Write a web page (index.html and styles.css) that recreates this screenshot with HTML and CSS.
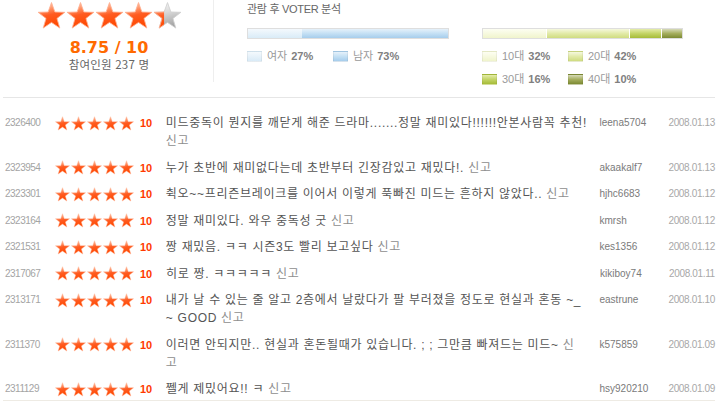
FILE: index.html
```html
<!DOCTYPE html>
<html lang="ko">
<head>
<meta charset="utf-8">
<title>관람 후 VOTER 분석</title>
<link rel="stylesheet" href="styles.css">
</head>
<body>
<svg class="defs" aria-hidden="true">
  <defs>
    <linearGradient id="gOn" x1="0" y1="0" x2="0.25" y2="1">
      <stop offset="0" stop-color="#ffd9c8"/>
      <stop offset="0.3" stop-color="#ff9a70"/>
      <stop offset="0.55" stop-color="#ff5c22"/>
      <stop offset="1" stop-color="#ff4800"/>
    </linearGradient>
    <linearGradient id="gOff" x1="0" y1="0" x2="0.25" y2="1">
      <stop offset="0" stop-color="#fafafa"/>
      <stop offset="0.45" stop-color="#dadada"/>
      <stop offset="1" stop-color="#a6a6a6"/>
    </linearGradient>
    <clipPath id="clipPart">
      <rect x="0" y="0" width="38" height="100"/>
    </clipPath>
    <symbol id="star-on" viewBox="0 0 100 94">
      <path d="M50 2 L61.76 34.82 L96.6 35.86 L69.02 57.18 L78.8 90.64 L50 71 L21.2 90.64 L30.98 57.18 L3.4 35.86 L38.24 34.82 Z" fill="url(#gOn)" stroke="#ffb092" stroke-width="3" stroke-linejoin="round"/>
    </symbol>
    <symbol id="star-off" viewBox="0 0 100 94">
      <path d="M50 2 L61.76 34.82 L96.6 35.86 L69.02 57.18 L78.8 90.64 L50 71 L21.2 90.64 L30.98 57.18 L3.4 35.86 L38.24 34.82 Z" fill="url(#gOff)" stroke="#cfcfcf" stroke-width="3" stroke-linejoin="round"/>
    </symbol>
  </defs>
</svg>

<div class="top">
  <div class="summary">
    <div class="big-stars">
      <svg class="bstar" viewBox="0 0 100 94"><use href="#star-on"/></svg>
      <svg class="bstar" viewBox="0 0 100 94"><use href="#star-on"/></svg>
      <svg class="bstar" viewBox="0 0 100 94"><use href="#star-on"/></svg>
      <svg class="bstar" viewBox="0 0 100 94"><use href="#star-on"/></svg>
      <svg class="bstar" viewBox="0 0 100 94"><use href="#star-off"/><g clip-path="url(#clipPart)"><use href="#star-on"/></g></svg>
    </div>
    <div class="score">8.75 / 10</div>
    <div class="count">참여인원 237 명</div>
  </div>

  <div class="analysis">
    <div class="title">관람 후 VOTER 분석</div>
    <div class="charts">
      <div class="chart gender">
        <div class="bar">
          <span class="seg female" style="width:27%"></span>
          <span class="seg male" style="width:73%"></span>
        </div>
        <div class="legend">
          <div class="item"><span class="sw female"></span><span class="lbl">여자</span><b>27%</b></div>
          <div class="item"><span class="sw male"></span><span class="lbl">남자</span><b>73%</b></div>
        </div>
      </div>
      <div class="chart age">
        <div class="bar gapped">
          <span class="seg a10" style="width:32%"></span>
          <span class="seg a20" style="width:42%"></span>
          <span class="seg a30" style="width:16%"></span>
          <span class="seg a40" style="width:10%"></span>
        </div>
        <div class="legend">
          <div class="item"><span class="sw a10"></span><span class="lbl">10대</span><b>32%</b></div>
          <div class="item"><span class="sw a20"></span><span class="lbl">20대</span><b>42%</b></div>
        </div>
        <div class="legend second">
          <div class="item"><span class="sw a30"></span><span class="lbl">30대</span><b>16%</b></div>
          <div class="item"><span class="sw a40"></span><span class="lbl">40대</span><b>10%</b></div>
        </div>
      </div>
    </div>
  </div>
</div>

<div class="list">
  <div class="row">
    <span class="no">2326400</span>
    <span class="stars"><svg class="sstar"><use href="#star-on"/></svg><svg class="sstar"><use href="#star-on"/></svg><svg class="sstar"><use href="#star-on"/></svg><svg class="sstar"><use href="#star-on"/></svg><svg class="sstar"><use href="#star-on"/></svg></span>
    <span class="pt">10</span>
    <span class="text">미드중독이 뭔지를 깨닫게 해준 드라마.......정말 재미있다!!!!!!안본사람꼭 추천!<br><a class="report">신고</a></span>
    <span class="id">leena5704</span>
    <span class="date">2008.01.13</span>
  </div>
  <div class="row">
    <span class="no">2323954</span>
    <span class="stars"><svg class="sstar"><use href="#star-on"/></svg><svg class="sstar"><use href="#star-on"/></svg><svg class="sstar"><use href="#star-on"/></svg><svg class="sstar"><use href="#star-on"/></svg><svg class="sstar"><use href="#star-on"/></svg></span>
    <span class="pt">10</span>
    <span class="text">누가 초반에 재미없다는데 초반부터 긴장감있고 재밌다!. <a class="report">신고</a></span>
    <span class="id">akaakalf7</span>
    <span class="date">2008.01.13</span>
  </div>
  <div class="row">
    <span class="no">2323301</span>
    <span class="stars"><svg class="sstar"><use href="#star-on"/></svg><svg class="sstar"><use href="#star-on"/></svg><svg class="sstar"><use href="#star-on"/></svg><svg class="sstar"><use href="#star-on"/></svg><svg class="sstar"><use href="#star-on"/></svg></span>
    <span class="pt">10</span>
    <span class="text">췩오~~프리즌브레이크를 이어서 이렇게 푹빠진 미드는 흔하지 않았다.. <a class="report">신고</a></span>
    <span class="id">hjhc6683</span>
    <span class="date">2008.01.12</span>
  </div>
  <div class="row">
    <span class="no">2323164</span>
    <span class="stars"><svg class="sstar"><use href="#star-on"/></svg><svg class="sstar"><use href="#star-on"/></svg><svg class="sstar"><use href="#star-on"/></svg><svg class="sstar"><use href="#star-on"/></svg><svg class="sstar"><use href="#star-on"/></svg></span>
    <span class="pt">10</span>
    <span class="text">정말 재미있다. 와우 중독성 굿 <a class="report">신고</a></span>
    <span class="id">kmrsh</span>
    <span class="date">2008.01.12</span>
  </div>
  <div class="row">
    <span class="no">2321531</span>
    <span class="stars"><svg class="sstar"><use href="#star-on"/></svg><svg class="sstar"><use href="#star-on"/></svg><svg class="sstar"><use href="#star-on"/></svg><svg class="sstar"><use href="#star-on"/></svg><svg class="sstar"><use href="#star-on"/></svg></span>
    <span class="pt">10</span>
    <span class="text">짱 재밌음. ㅋㅋ 시즌3도 빨리 보고싶다 <a class="report">신고</a></span>
    <span class="id">kes1356</span>
    <span class="date">2008.01.12</span>
  </div>
  <div class="row">
    <span class="no">2317067</span>
    <span class="stars"><svg class="sstar"><use href="#star-on"/></svg><svg class="sstar"><use href="#star-on"/></svg><svg class="sstar"><use href="#star-on"/></svg><svg class="sstar"><use href="#star-on"/></svg><svg class="sstar"><use href="#star-on"/></svg></span>
    <span class="pt">10</span>
    <span class="text">히로 짱. ㅋㅋㅋㅋㅋ <a class="report">신고</a></span>
    <span class="id">kikiboy74</span>
    <span class="date">2008.01.11</span>
  </div>
  <div class="row">
    <span class="no">2313171</span>
    <span class="stars"><svg class="sstar"><use href="#star-on"/></svg><svg class="sstar"><use href="#star-on"/></svg><svg class="sstar"><use href="#star-on"/></svg><svg class="sstar"><use href="#star-on"/></svg><svg class="sstar"><use href="#star-on"/></svg></span>
    <span class="pt">10</span>
    <span class="text">내가 날 수 있는 줄 알고 2층에서 날랐다가 팔 부러졌을 정도로 현실과 혼동 ~_<br>~ GOOD <a class="report">신고</a></span>
    <span class="id">eastrune</span>
    <span class="date">2008.01.10</span>
  </div>
  <div class="row">
    <span class="no">2311370</span>
    <span class="stars"><svg class="sstar"><use href="#star-on"/></svg><svg class="sstar"><use href="#star-on"/></svg><svg class="sstar"><use href="#star-on"/></svg><svg class="sstar"><use href="#star-on"/></svg><svg class="sstar"><use href="#star-on"/></svg></span>
    <span class="pt">10</span>
    <span class="text">이러면 안되지만.. 현실과 혼돈될때가 있습니다. ; ; 그만큼 빠져드는 미드~ <a class="report">신<br>고</a></span>
    <span class="id">k575859</span>
    <span class="date">2008.01.09</span>
  </div>
  <div class="row">
    <span class="no">2311129</span>
    <span class="stars"><svg class="sstar"><use href="#star-on"/></svg><svg class="sstar"><use href="#star-on"/></svg><svg class="sstar"><use href="#star-on"/></svg><svg class="sstar"><use href="#star-on"/></svg><svg class="sstar"><use href="#star-on"/></svg></span>
    <span class="pt">10</span>
    <span class="text">쩰게 제밌어요!! ㅋ <a class="report">신고</a></span>
    <span class="id">hsy920210</span>
    <span class="date">2008.01.09</span>
  </div>
</div>
</body>
</html>
```

FILE: styles.css
```css
* { box-sizing: border-box; }

html, body {
  margin: 0;
  padding: 0;
  background: #ffffff;
}

body {
  font-family: "Liberation Sans", "Noto Sans CJK KR", sans-serif;
  color: #555555;
  width: 721px;
  overflow: hidden;
}

.defs {
  position: absolute;
  width: 0;
  height: 0;
  overflow: hidden;
}

/* ---------- top area ---------- */
.top {
  display: flex;
  height: 97px;
}

.summary {
  width: 214px;
  height: 82px;
  padding-left: 5px;
  border-right: 1px solid #eeeeee;
  display: flex;
  flex-direction: column;
  align-items: center;
}

.big-stars {
  display: flex;
  margin-top: 2px;
}

.bstar {
  width: 29px;
  height: 27px;
  display: block;
}

.score {
  margin-top: 10px;
  font-family: "DejaVu Sans", sans-serif;
  font-weight: bold;
  font-size: 16px;
  line-height: 18px;
  color: #ff6a00;
}

.count {
  font-family: "Noto Sans CJK KR", sans-serif;
  font-size: 11.5px;
  line-height: 14px;
  color: #666666;
  letter-spacing: 0.2px;
}

.analysis {
  padding-left: 33px;
  padding-top: 2px;
  flex: 1;
}

.title {
  font-size: 11px;
  line-height: 14px;
  color: #666666;
  letter-spacing: -0.3px;
}

.charts {
  display: flex;
  gap: 33px;
  margin-top: 12px;
}

.chart.gender { width: 202px; }
.chart.age { width: 201px; }

.bar {
  display: flex;
  height: 11px;
  border: 1px solid #dedede;
}

.bar.gapped { gap: 1px; background: #ffffff; }

.seg { display: block; height: 100%; }

.female { background: linear-gradient(#f4f9fd, #d9ebf7); }
.male   { background: linear-gradient(#e6f1fa 0%, #c4e0f4 50%, #a6cdec 100%); }
.a10    { background: linear-gradient(#fdfef2, #f0f4cc); }
.a20    { background: linear-gradient(#f5f8de 0%, #e2eaa8 50%, #cfdc80 100%); }
.a30    { background: linear-gradient(#e4ecaa 0%, #c3d466 50%, #a6bc38 100%); }
.a40    { background: linear-gradient(#d6dab8 0%, #a5ae5e 50%, #7c8a32 100%); }

.legend {
  display: flex;
  margin-top: 12px;
  height: 11px;
}

.legend.second { margin-top: 12px; }

.item {
  width: 86px;
  display: flex;
  align-items: center;
  font-size: 11px;
  line-height: 11px;
  white-space: nowrap;
}

.sw {
  width: 15px;
  height: 11px;
  border: 1px solid rgba(0, 0, 0, 0.05);
  margin-right: 5px;
}

.lbl {
  color: #9a9a9a;
  margin-right: 4px;
}

.item b {
  color: #808080;
  font-weight: bold;
}

/* ---------- comment list ---------- */
.list {
  margin: 0 6px 0 3px;
  border-top: 1px solid #e6e6e6;
  border-bottom: 1px solid #eeebe4;
  padding-top: 11px;
}

.row {
  display: flex;
  align-items: flex-start;
  padding: 5px 0 3.5px 2px;
  line-height: 18px;
}

.row:last-child {
  padding-bottom: 2px;
}

.no {
  width: 50px;
  font-size: 10px;
  letter-spacing: -0.5px;
  color: #a4a4a4;
}

.stars {
  width: 85px;
  height: 18px;
  display: flex;
  align-items: center;
}

.sstar {
  width: 15px;
  height: 15px;
  margin-right: 1px;
  display: block;
}

.pt {
  width: 26px;
  font-size: 11px;
  font-weight: bold;
  color: #ff3a00;
}

.text {
  width: 434px;
  font-size: 12px;
  letter-spacing: 0.7px;
  color: #555555;
  white-space: nowrap;
}

.report {
  color: #8e8e8e;
}

.id {
  width: 69px;
  font-size: 10px;
  color: #7a7a7a;
}

.date {
  font-size: 10px;
  letter-spacing: -0.35px;
  color: #a8a8a8;
}
```
